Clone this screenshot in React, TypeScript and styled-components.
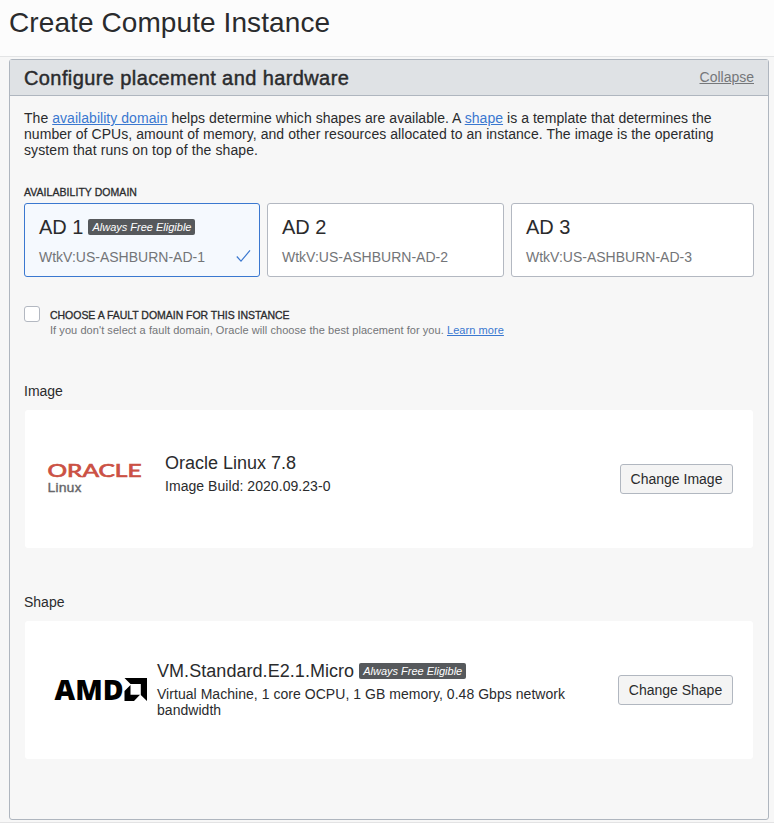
import React from "react";
import styled, { createGlobalStyle } from "styled-components";

const GlobalStyle = createGlobalStyle`
  * { box-sizing: border-box; }
  body {
    margin: 0;
    background: #f7f7f7;
    color: #2a2b2d;
    font-family: "Liberation Sans", Arial, sans-serif;
    font-size: 14px;
    line-height: 16px;
  }
`;

const Page = styled.div`
  height: 823px;
  overflow: hidden;
  border-bottom: 1px solid #e3e3e4;
`;

const PageHeader = styled.header`
  height: 57px;
  padding: 6px 9px 0;
  background: #fcfcfc;
  border-bottom: 1px solid #e3e4e5;
`;

const Fit = styled.span<{ $track?: number }>`
  letter-spacing: ${(p) => p.$track ?? 0}px;
`;

const PageTitle = styled.h1`
  margin: 0;
  font-size: 28px;
  line-height: 34px;
  font-weight: 400;
`;

const Panel = styled.section`
  height: 761px;
  margin: 2px 5px 0 9px;
  border: 1px solid #afb6bf;
  border-radius: 3px;
`;

const PanelHeader = styled.div`
  display: flex;
  align-items: center;
  justify-content: space-between;
  height: 36px;
  padding: 0 14px 1px;
  background: #dfe2e5;
  border-bottom: 1px solid #afb6bf;
`;

const PanelTitle = styled.h2`
  margin: 0;
  padding-top: 2px;
  font-size: 20px;
  line-height: 24px;
  font-weight: 400;
  -webkit-text-stroke: 0.45px currentColor;
`;

const Link = styled.a<{ $muted?: boolean }>`
  color: ${(p) => (p.$muted ? "#75777a" : "#3a78d0")};
  text-decoration: underline;
  text-underline-offset: 1px;
`;

const PanelBody = styled.div`
  display: flex;
  flex-direction: column;
  padding: 14px;
`;

const Intro = styled.p`
  margin: 0;
  white-space: nowrap;
`;

const Caption = styled.div`
  font-size: 10.5px;
  line-height: 16px;
  white-space: nowrap;
  -webkit-text-stroke: 0.3px currentColor;
`;

const DomainSection = styled.div`
  display: flex;
  flex-direction: column;
  gap: 3px;
  margin-top: 26px;
`;

const DomainGrid = styled.div`
  display: grid;
  grid-template-columns: 236px 237px 243px;
  gap: 7px;
`;

const DomainCard = styled.div<{ $selected?: boolean }>`
  display: flex;
  flex-direction: column;
  height: 74px;
  padding: 11px 8px 0 14px;
  border: 1px solid ${(p) => (p.$selected ? "#3b78d0" : "#b3b8c1")};
  border-radius: 3px;
  background: ${(p) => (p.$selected ? "#f5f9fe" : "#fff")};
`;

const TitleRow = styled.div<{ $size: number }>`
  display: flex;
  align-items: center;
  gap: 5px;
  height: 24px;
  font-size: ${(p) => p.$size}px;
  line-height: 24px;
  white-space: nowrap;
`;

const DomainFoot = styled.div`
  display: flex;
  align-items: center;
  justify-content: space-between;
  height: 20px;
  margin-top: 8px;
  color: #737578;
`;

const Badge = styled.span`
  width: 107px;
  height: 16px;
  border-radius: 2px;
  background: #56595c;
  color: #fff;
  font-size: 11px;
  font-style: italic;
  line-height: 17px;
  text-align: center;
`;

const FaultOption = styled.div`
  display: flex;
  gap: 10px;
  margin-top: 29px;
`;

const Checkbox = styled.div`
  width: 16px;
  height: 16px;
  border: 1px solid #b3b8c1;
  border-radius: 3px;
  background: #fff;
`;

const FaultText = styled.div`
  padding-top: 1px;
`;

const Hint = styled.div`
  color: #737578;
  font-size: 11px;
  line-height: 14px;
`;

const SectionLabel = styled.div<{ $top: number }>`
  margin-top: ${(p) => p.$top}px;
  line-height: 16px;
`;

const ResourceCard = styled.div`
  display: flex;
  align-items: center;
  height: 138px;
  margin: 11px 1px 0;
  padding-right: 20px;
  border-radius: 3px;
  background: #fff;
`;

const LogoCell = styled.div<{ $width: number }>`
  display: flex;
  flex: none;
  width: ${(p) => p.$width}px;
`;

const ResourceInfo = styled.div<{ $lift: number; $gap: number }>`
  display: flex;
  flex: 1;
  flex-direction: column;
  gap: ${(p) => p.$gap}px;
  padding-bottom: ${(p) => p.$lift}px;
  white-space: nowrap;
`;

const Action = styled.button<{ $width: number }>`
  width: ${(p) => p.$width}px;
  height: 30px;
  padding: 0;
  border: 1px solid #b1b7c0;
  border-radius: 3px;
  background: #f4f4f4;
  color: #2a2b2d;
  font: inherit;
`;

const CheckIcon = () => (
  <svg width="15" height="14" viewBox="0 0 15 14" fill="none" stroke="#3b78d0" strokeWidth="1.2">
    <path d="M.8 6.5 5 11.2 14 .4" />
  </svg>
);

const OracleLogo = () => (
  <svg width="140" height="60" viewBox="0 0 140 60">
    <text x="22.5" y="27.6" fill="#cb5144" stroke="#cb5144" strokeWidth=".7" fontFamily="Lato, sans-serif" fontSize="17.5" textLength="94" lengthAdjust="spacingAndGlyphs">ORACLE</text>
    <text x="22.5" y="43.4" fill="#68676a" stroke="#68676a" strokeWidth=".3" fontFamily="Roboto, sans-serif" fontSize="13.5" textLength="34" lengthAdjust="spacingAndGlyphs">Linux</text>
  </svg>
);

const AmdLogo = () => (
  <svg width="132" height="60" viewBox="0 0 132 60">
    <text x="29.5" y="40" fontFamily="Open Sans, sans-serif" fontWeight="800" fontSize="28" textLength="69" lengthAdjust="spacingAndGlyphs">AMD</text>
    <path d="M99.5 18H122v23l-6.2-6V24h-10.3zM99.5 31l6-6v9.7h9.5l-6 6.3h-9.5z" />
  </svg>
);

export default function App() {
  return (
    <Page>
      <GlobalStyle />
      <PageHeader>
        <PageTitle><Fit $track={0.09}>Create Compute Instance</Fit></PageTitle>
      </PageHeader>
      <Panel>
        <PanelHeader>
          <PanelTitle><Fit $track={0.4}>Configure placement and hardware</Fit></PanelTitle>
          <Link $muted>Collapse</Link>
        </PanelHeader>
        <PanelBody>
          <Intro>
            <Fit $track={0.047}>The <Link>availability domain</Link> helps determine which shapes are available. A <Link>shape</Link> is a template that determines the</Fit>
            <br />
            <Fit $track={0.058}>number of CPUs, amount of memory, and other resources allocated to an instance. The image is the operating</Fit>
            <br />
            <Fit $track={0.1}>system that runs on top of the shape.</Fit>
          </Intro>
          <DomainSection>
            <Caption><Fit $track={0.05}>AVAILABILITY DOMAIN</Fit></Caption>
            <DomainGrid>
              <DomainCard $selected>
                <TitleRow $size={20}><Fit>AD 1</Fit><Badge>Always Free Eligible</Badge></TitleRow>
                <DomainFoot><Fit>WtkV:US-ASHBURN-AD-1</Fit><CheckIcon /></DomainFoot>
              </DomainCard>
              <DomainCard>
                <TitleRow $size={20}><Fit>AD 2</Fit></TitleRow>
                <DomainFoot><Fit>WtkV:US-ASHBURN-AD-2</Fit></DomainFoot>
              </DomainCard>
              <DomainCard>
                <TitleRow $size={20}><Fit>AD 3</Fit></TitleRow>
                <DomainFoot><Fit>WtkV:US-ASHBURN-AD-3</Fit></DomainFoot>
              </DomainCard>
            </DomainGrid>
          </DomainSection>
          <FaultOption>
            <Checkbox role="checkbox" aria-checked="false" />
            <FaultText>
              <Caption><Fit $track={-0.03}>CHOOSE A FAULT DOMAIN FOR THIS INSTANCE</Fit></Caption>
              <Hint><Fit $track={0.065}>If you don't select a fault domain, Oracle will choose the best placement for you. <Link>Learn more</Link></Fit></Hint>
            </FaultText>
          </FaultOption>
          <SectionLabel $top={46}>Image</SectionLabel>
          <ResourceCard>
            <LogoCell $width={140}><OracleLogo /></LogoCell>
            <ResourceInfo $lift={13} $gap={3}>
              <TitleRow $size={18}><Fit>Oracle Linux 7.8</Fit></TitleRow>
              <div><Fit $track={0.05}>Image Build: 2020.09.23-0</Fit></div>
            </ResourceInfo>
            <Action $width={113}>Change Image</Action>
          </ResourceCard>
          <SectionLabel $top={46}>Shape</SectionLabel>
          <ResourceCard>
            <LogoCell $width={132}><AmdLogo /></LogoCell>
            <ResourceInfo $lift={3} $gap={3}>
              <TitleRow $size={18}><Fit $track={0.05}>VM.Standard.E2.1.Micro</Fit><Badge>Always Free Eligible</Badge></TitleRow>
              <div><Fit $track={0.04}>Virtual Machine, 1 core OCPU, 1 GB memory, 0.48 Gbps network<br />bandwidth</Fit></div>
            </ResourceInfo>
            <Action $width={115}>Change Shape</Action>
          </ResourceCard>
        </PanelBody>
      </Panel>
    </Page>
  );
}
